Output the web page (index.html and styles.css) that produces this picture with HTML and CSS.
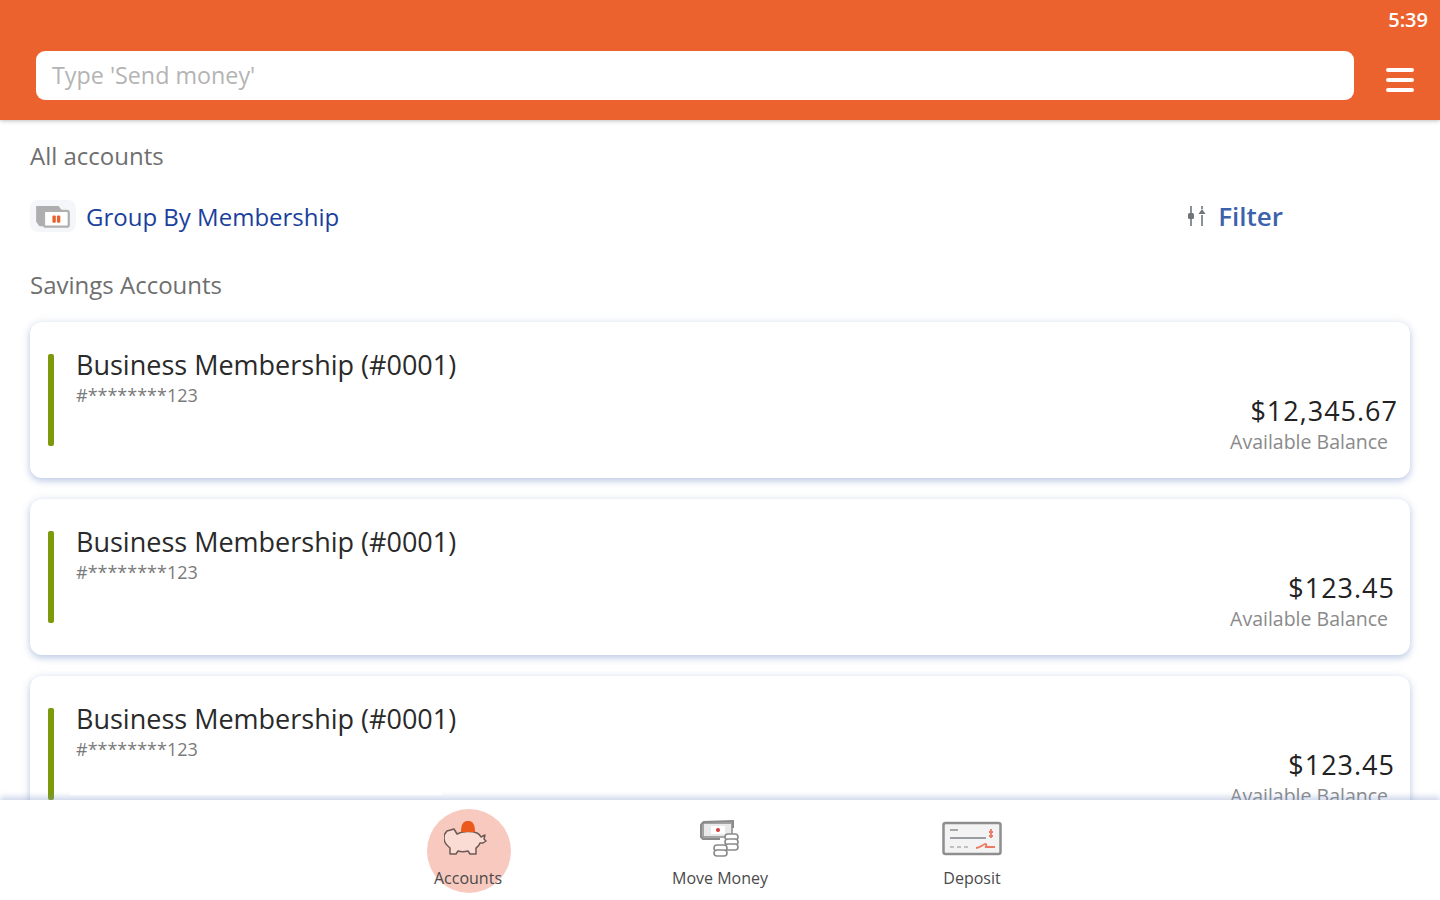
FILE: index.html
```html
<!DOCTYPE html>
<html lang="en">
<head>
<meta charset="utf-8">
<title>Accounts</title>
<link rel="stylesheet" href="styles.css">
</head>
<body>
<div class="app">
  <header class="topbar">
    <div class="status">5:39</div>
    <div class="searchrow">
      <div class="search">Type 'Send money'</div>
      <div class="menu"><span></span><span></span><span></span></div>
    </div>
  </header>
  <main class="content">
    <div class="crumb">All accounts</div>
    <div class="tools">
      <div class="group">
        <span class="groupicon">
          <svg width="36" height="26" viewBox="0 0 32 22">
            <path d="M1 2h20l3 4H8v14H4l-3-4z" fill="#aeaeae"/>
            <rect x="8" y="6.500" width="22" height="14" rx="1.500" fill="#fff" stroke="#b0b0b0" stroke-width="2"/>
            <rect x="15.500" y="10.500" width="3" height="6.500" rx="1" fill="#e8622e"/>
            <rect x="19.500" y="10.500" width="3" height="6.500" rx="1" fill="#e8622e"/>
          </svg>
        </span>
        <span class="grouplabel">Group By Membership</span>
      </div>
      <div class="filter">
        <svg width="20" height="24" viewBox="0 0 20 24">
          <g stroke="#8a8f96" stroke-width="2" fill="none">
            <path d="M5 2v7M5 15v7"/>
            <path d="M16 2v3M16 11v11"/>
          </g>
          <rect x="2" y="9" width="6" height="6" rx="1.500" fill="#6f747a"/>
          <path d="M16 5l-3.500 5h7z" fill="#6f747a"/>
        </svg>
        <span class="filterlabel">Filter</span>
      </div>
    </div>
    <div class="section">Savings Accounts</div>
    <div class="cards">
      <article class="card">
        <span class="bar"></span>
        <div class="info">
          <div class="name">Business Membership (#0001)</div>
          <div class="num">#********123</div>
        </div>
        <div class="bal">
          <div class="amount amount-long">$12,345.67</div>
          <div class="ballabel">Available Balance</div>
        </div>
      </article>
      <article class="card">
        <span class="bar"></span>
        <div class="info">
          <div class="name">Business Membership (#0001)</div>
          <div class="num">#********123</div>
        </div>
        <div class="bal">
          <div class="amount">$123.45</div>
          <div class="ballabel">Available Balance</div>
        </div>
      </article>
      <article class="card">
        <span class="bar"></span>
        <div class="info">
          <div class="name">Business Membership (#0001)</div>
          <div class="num">#********123</div>
        </div>
        <div class="bal">
          <div class="amount">$123.45</div>
          <div class="ballabel">Available Balance</div>
        </div>
      </article>
    </div>
  </main>
  <nav class="tabs">
    <div class="tab tab-active">
      <svg class="tabicon" width="48" height="42" viewBox="0 0 48 42">
        <path d="M10 11l3 5c5-3 15-3 20-1c2 1 3 2 4 4l4-2-1 4 2 2-3 2h-3c-1 3-3 4-4 5v6h-6l-2-3c-4 1-7 1-10 0l-2 3h-6v-6c-4-3-6-6-6-10c0-3 1-5 3-7z" fill="#fbdcd5" stroke="#6b5a54" stroke-width="1.500" stroke-linejoin="round"/>
        <path d="M17 14c0-9 3-11 7-11s7 2 7 11z" fill="#ea5a1c"/>
      </svg>
      <span class="tablabel">Accounts</span>
    </div>
    <div class="tab">
      <svg class="tabicon tabicon-move" width="48" height="42" viewBox="0 0 48 42">
        <path d="M5 4l30-1v7M5 4l-2 3v12l2 2h17" fill="none" stroke="#8a8a8a" stroke-width="2"/>
        <rect x="5" y="5" width="29" height="14" fill="#e9e9e9" stroke="#8a8a8a" stroke-width="1.500"/>
        <rect x="13" y="8" width="14" height="8" fill="#fff"/>
        <circle cx="20" cy="12" r="2" fill="#d63a3a"/>
        <g fill="#fff" stroke="#8a8a8a" stroke-width="1.600">
          <rect x="27" y="16" width="13" height="6" rx="3"/>
          <rect x="27" y="21" width="13" height="6" rx="3"/>
          <rect x="27" y="26" width="13" height="6" rx="3"/>
          <rect x="16" y="27" width="13" height="6" rx="3"/>
          <rect x="16" y="32" width="13" height="6" rx="3"/>
        </g>
      </svg>
      <span class="tablabel">Move Money</span>
    </div>
    <div class="tab">
      <svg class="tabicon" width="60" height="42" viewBox="0 0 60 42">
        <rect x="1.500" y="5" width="57" height="31" rx="2" fill="#f3f3f3" stroke="#8e8e8e" stroke-width="2.500"/>
        <path d="M8 12h8" stroke="#8e8e8e" stroke-width="1.500"/>
        <path d="M8 20h36" stroke="#7d8088" stroke-width="1.500"/>
        <path d="M8 29h4M15 29h4M22 29h4" stroke="#b0b0b0" stroke-width="1.500"/>
        <path d="M49 11v9M47 14h4M47 18h4" stroke="#ec7a62" stroke-width="1.800" fill="none"/>
        <path d="M34 30c4 0 6-3 9-4 2 0 2 2 0 3h10" stroke="#ec7a62" stroke-width="1.800" fill="none"/>
      </svg>
      <span class="tablabel">Deposit</span>
    </div>
  </nav>
</div>
</body>
</html>
```

FILE: styles.css
```css
* { box-sizing: border-box; }
html, body { margin: 0; height: 100%; }
body {
  font-family: "Open Sans", "Noto Sans", sans-serif;
  background: #fff;
  color: #222;
}
.app {
  height: 900px;
  display: flex;
  flex-direction: column;
  overflow: hidden;
}
.topbar {
  height: 120px;
  flex: none;
  background: #ec622e;
  box-shadow: 0 1px 4px rgba(0, 0, 0, .25);
  position: relative;
  z-index: 2;
  padding: 7px 12px 0 36px;
}
.status {
  text-align: right;
  color: #fff;
  font-size: 20px;
  font-weight: 600;
  line-height: 26px;
}
.searchrow {
  display: flex;
  align-items: center;
  margin-top: 18px;
}
.search {
  width: 1318px;
  height: 49px;
  background: #fff;
  border-radius: 9px;
  padding-left: 16px;
  font-size: 23.300px;
  line-height: 48px;
  color: #b4b4b4;
}
.menu {
  margin: 9px 0 0 32px;
  width: 28px;
  display: flex;
  flex-direction: column;
  gap: 6px;
}
.menu span {
  height: 4px;
  border-radius: 2px;
  background: #fff;
}
.content {
  flex: 1;
  min-height: 0;
  overflow: hidden;
  padding: 19px 30px 0;
}
.crumb, .section {
  font-size: 24px;
  line-height: 33px;
  color: #6f6f6f;
}
.tools {
  display: flex;
  align-items: center;
  justify-content: space-between;
  margin-top: 26px;
  height: 36px;
}
.group { display: flex; align-items: center; }
.groupicon {
  width: 46px;
  height: 32px;
  border-radius: 8px;
  background: #f4f6f9;
  display: flex;
  align-items: center;
  justify-content: center;
}
.grouplabel {
  margin-left: 10px;
  font-size: 24px;
  color: #1b3f9c;
}
.filter {
  display: flex;
  align-items: center;
  gap: 12px;
  margin-right: 127px;
}
.filterlabel {
  font-size: 26px;
  font-weight: 600;
  color: #3d62ac;
}
.section { margin-top: 34px; }
.cards {
  margin-top: 21px;
  display: flex;
  flex-direction: column;
  gap: 21px;
}
.card {
  height: 156px;
  flex: none;
  background: #fff;
  border-radius: 12px;
  box-shadow: 0 3px 7px rgba(115, 140, 200, .42), 0 0 10px rgba(150, 170, 210, .16);
  display: flex;
  padding: 32px 12px 0 18px;
}
.bar {
  width: 6px;
  height: 92px;
  border-radius: 2px;
  background: #7c9a0c;
  flex: none;
}
.info { margin-left: 22px; flex: 1; }
.name {
  font-size: 27px;
  line-height: 22px;
  color: #2a2a2a;
}
.num {
  margin-top: 7px;
  font-size: 18px;
  line-height: 24px;
  color: #7a7a7a;
}
.bal {
  display: flex;
  flex-direction: column;
  align-items: flex-end;
  padding-top: 38px;
}
.amount {
  font-size: 27px;
  line-height: 38px;
  letter-spacing: 1px;
  color: #222;
  margin-right: 3px;
}
.amount-long { margin-right: 0; }
.ballabel {
  margin-right: 10px;
  font-size: 19.500px;
  line-height: 24px;
  color: #8a8a8a;
}
.tabs {
  height: 100px;
  flex: none;
  background: #fff;
  display: flex;
  justify-content: center;
  position: relative;
  z-index: 2;
  box-shadow: 0 -3px 6px rgba(120, 145, 195, .38);
}
.tabs::after {
  content: "";
  position: absolute;
  left: 70px;
  top: -12px;
  width: 372px;
  height: 7px;
  background: #fff;
}
.tab {
  width: 252px;
  display: flex;
  flex-direction: column;
  align-items: center;
  position: relative;
  padding-top: 18px;
}
.tab-active::before {
  content: "";
  position: absolute;
  left: 85px;
  top: 9px;
  width: 84px;
  height: 84px;
  border-radius: 50%;
  background: #f8c9bf;
}
.tabicon { position: relative; flex: none; }
.tabicon-move { margin-left: 4px; }
.tablabel {
  position: relative;
  margin-top: 8px;
  font-size: 16px;
  line-height: 20px;
  color: #4a4a4a;
}
```
